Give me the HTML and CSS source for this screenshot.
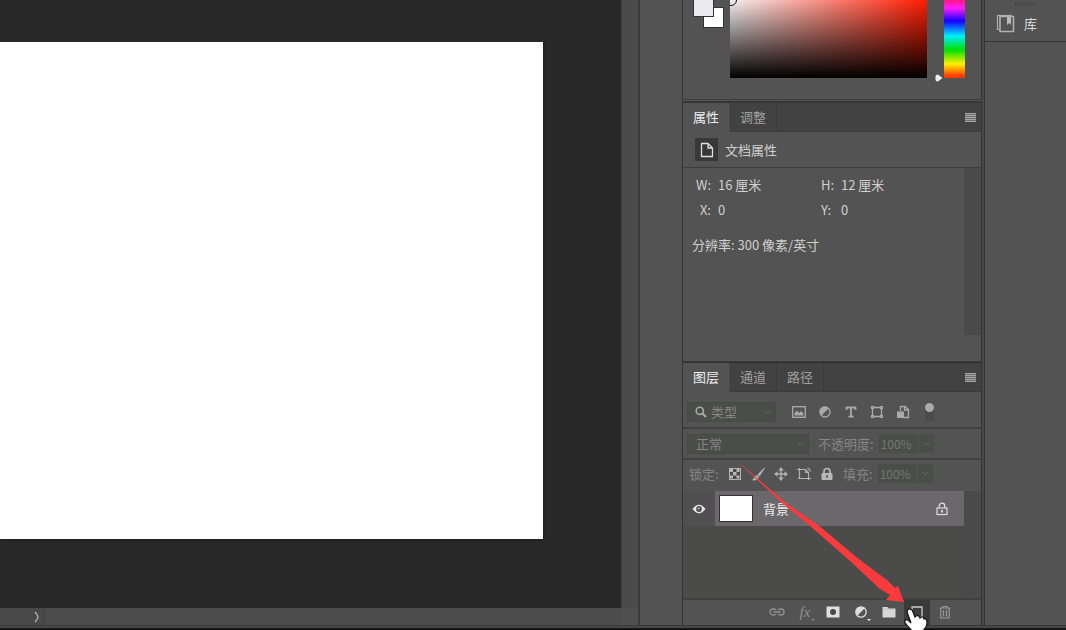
FILE: index.html
```html
<!DOCTYPE html>
<html lang="zh-CN">
<head>
<meta charset="utf-8">
<meta name="viewport" content="width=device-width, initial-scale=1">
<title>图像编辑器</title>
<link rel="stylesheet" href="styles.css">
</head>
<body>
<div class="app">
  <div class="main">
    <main class="workspace">
      <div class="stage"><div class="artboard"></div></div>
      <div class="scroll-y"></div>
      <div class="status"><button class="status-more" aria-label="更多状态"><svg width="6" height="12" viewBox="0 0 6 12"><path d="M1 1C5 5 5 7 1 11" fill="none" stroke="#b8b8b8" stroke-width="1.3"/></svg></button></div>
      <div class="scroll-corner"></div>
    </main>
    <div class="gutter"></div>
    <aside class="dock">
      <section class="panel color-panel" aria-label="颜色">
        <div class="swatches"><span class="swatch back"></span><span class="swatch front"></span></div>
        <div class="field"><span class="field-ring"></span></div>
        <div class="hue"><svg class="hue-pointer" width="8" height="8" viewBox="0 0 8 8"><path d="M0.500 2Q1 0.500 3 0.500L7.500 4L3 7.500Q1 7.500 0.500 6Z" fill="#eee"/></svg></div>
      </section>

      <section class="panel properties">
        <div class="tabs" role="tablist">
          <button class="tab active" role="tab" aria-selected="true">属性</button>
          <button class="tab" role="tab" aria-selected="false">调整</button>
          <button class="menu" aria-label="属性菜单"><span class="bars"></span></button>
        </div>
        <div class="doc-head">
          <span class="doc-icon"><svg width="14" height="16" viewBox="0 0 14 16" fill="none" stroke="#ddd" stroke-width="1.300"><path d="M1.500 1.500H8L12.500 6V14.500H1.500ZM8 1.500V6H12.500"/></svg></span>
          <span>文档属性</span>
        </div>
        <div class="doc-body">
          <div class="doc-info">
            <dl class="metrics">
              <div><dt>W:</dt><dd>16 厘米</dd></div>
              <div><dt>H:</dt><dd>12 厘米</dd></div>
              <div><dt>X:</dt><dd>0</dd></div>
              <div><dt>Y:</dt><dd>0</dd></div>
            </dl>
            <p class="resolution">分辨率: 300 像素/英寸</p>
          </div>
          <div class="track"></div>
        </div>
      </section>

      <section class="panel layers">
        <div class="tabs" role="tablist">
          <button class="tab active" role="tab" aria-selected="true">图层</button>
          <button class="tab" role="tab" aria-selected="false">通道</button>
          <button class="tab" role="tab" aria-selected="false">路径</button>
          <button class="menu" aria-label="图层菜单"><span class="bars"></span></button>
        </div>
        <div class="row filter-row">
          <div class="combo kind">
            <svg class="search" width="12" height="12" viewBox="0 0 12 12" fill="none" stroke="#aaa"><circle cx="4.800" cy="4.800" r="3.600" stroke-width="1.600"/><path d="M7.500 7.500L11 11" stroke-width="2.200"/></svg>
            <select aria-label="图层类型"><option>类型</option></select>
            <svg class="chev" width="7" height="5" viewBox="0 0 7 5"><path d="M0.500 1L3.500 4L6.500 1" fill="none" stroke="#6b6c6b"/></svg>
          </div>
          <div class="filters">
            <button aria-label="像素图层"><svg width="16" height="16" viewBox="0 0 16 16"><rect x="1.700" y="2.700" width="12.600" height="10.600" fill="none" stroke="#aaa" stroke-width="1.300"/><path d="M3.500 11.500V9L6 6.500L8 9L10 7L12.500 9.500V11.500Z" fill="#aaa"/></svg></button>
            <button aria-label="调整图层"><svg width="16" height="16" viewBox="0 0 16 16"><circle cx="8" cy="8" r="5" fill="none" stroke="#aaa" stroke-width="1.300"/><path d="M11.500 4.500A5 5 0 1 0 4.500 11.500Z" fill="#aaa"/></svg></button>
            <button aria-label="文字图层"><svg width="16" height="16" viewBox="0 0 16 16"><path d="M3.500 3V6M12.500 3V6M3 3.500H13M8 3V13M5.500 12.700H10.500" fill="none" stroke="#aaa" stroke-width="1.800"/></svg></button>
            <button aria-label="形状图层"><svg width="16" height="16" viewBox="0 0 16 16" fill="none" stroke="#aaa" stroke-width="1.300"><path d="M3.500 3.500H12.500V12.500H3.500Z"/><g fill="#858585" stroke-width="1"><rect x="2.500" y="2.500" width="2" height="2"/><rect x="11.500" y="2.500" width="2" height="2"/><rect x="2.500" y="11.500" width="2" height="2"/><rect x="11.500" y="11.500" width="2" height="2"/></g></svg></button>
            <button aria-label="智能对象"><svg width="16" height="16" viewBox="0 0 16 16"><path d="M5.500 7V2.500H10L13.500 5.500V13.500H9M9.500 2.500V6H13" fill="none" stroke="#aaa" stroke-width="1.300"/><rect x="2" y="7.500" width="7" height="6.500" fill="#aaa"/></svg></button>
          </div>
          <button class="toggle" aria-label="打开图层过滤"><span></span></button>
        </div>
        <div class="row blend-row">
          <div class="combo mode">
            <select aria-label="混合模式"><option>正常</option></select>
            <svg class="chev" width="7" height="5" viewBox="0 0 7 5"><path d="M0.500 1L3.500 4L6.500 1" fill="none" stroke="#6b6c6b"/></svg>
          </div>
          <label for="opacity">不透明度:</label>
          <div class="percent"><input id="opacity" value="100%"><button aria-label="不透明度滑块"><svg width="7" height="5" viewBox="0 0 7 5"><path d="M0.500 1L3.500 4L6.500 1" fill="none" stroke="#6b6c6b"/></svg></button></div>
        </div>
        <div class="row lock-row">
          <span class="lock-label">锁定:</span>
          <div class="locks">
            <button aria-label="锁定透明像素"><svg width="16" height="16" viewBox="0 0 16 16"><rect x="2.500" y="2.500" width="11" height="11" fill="#494949" stroke="#b3b3b3"/><path d="M3 3h3v3h-3zM9.500 3h3v3h-3zM6 6h3.500v3.500h-3.500zM3 9.500h3v3h-3zM9.500 9.500h3v3h-3z" fill="#b9b9b9"/></svg></button>
            <button aria-label="锁定图像像素"><svg width="16" height="16" viewBox="0 0 16 16"><path d="M14.500 1.500L7.500 8.500L9.500 10.500L15 2Z" fill="#b3b3b3"/><path d="M7 9L9 11C8 14 5 15 1.500 14C4 13.500 4 10 7 9Z" fill="#a9bcb1"/></svg></button>
            <button aria-label="锁定位置"><svg width="16" height="16" viewBox="0 0 16 16"><path d="M8 3V13M3 8H13" stroke="#b3b3b3" stroke-width="1.400"/><path d="M8 1L10.800 4.500H5.200ZM8 15L10.800 11.500H5.200ZM1 8L4.500 5.200V10.800ZM15 8L11.500 5.200V10.800Z" fill="#b3b3b3"/></svg></button>
            <button aria-label="防止画板嵌套"><svg width="16" height="16" viewBox="0 0 16 16" fill="none" stroke="#b3b3b3" stroke-width="1.200"><path d="M3.500 2V13M1 3.500H9.500L12.500 6.500V14M2 12.500H15M9.500 3.500V6.500H12.500M11.500 2Q14 3 14.500 5.500"/></svg></button>
            <button aria-label="全部锁定"><svg width="16" height="16" viewBox="0 0 16 16"><path d="M5 7V5.500A3 3 0 0 1 11 5.500V7" fill="none" stroke="#b8b8b8" stroke-width="1.700"/><rect x="2.500" y="7" width="11" height="7" rx="1" fill="#b8b8b8"/><path d="M8 9V12" stroke="#535353" stroke-width="1.500"/></svg></button>
          </div>
          <label for="fill">填充:</label>
          <div class="percent"><input id="fill" value="100%"><button aria-label="填充滑块"><svg width="7" height="5" viewBox="0 0 7 5"><path d="M0.500 1L3.500 4L6.500 1" fill="none" stroke="#6b6c6b"/></svg></button></div>
        </div>
        <div class="layer-area">
          <div class="layer-list">
            <div class="layer">
              <button class="eye" aria-label="显示图层"><svg width="14" height="10" viewBox="0 0 14 10"><path d="M0.500 5Q7 -3.500 13.500 5Q7 13.500 0.500 5Z" fill="#e8e8e8"/><circle cx="7" cy="5" r="2.900" fill="#505050"/><circle cx="6.500" cy="4.500" r="1" fill="#bbb"/></svg></button>
              <div class="layer-main">
                <span class="thumb"></span><span class="layer-name">背景</span>
                <svg width="12" height="14" viewBox="0 0 12 14" fill="none" stroke="#ddd" stroke-width="1.200"><path d="M3.200 6V4A2.800 2.800 0 0 1 8.800 4V6"/><rect x="1" y="6" width="10" height="6.500"/><path d="M6 8V10.500" stroke-width="1.800"/></svg>
              </div>
            </div>
          </div>
          <div class="track"></div>
        </div>
        <div class="actions">
          <button aria-label="链接图层"><svg width="16" height="16" viewBox="0 0 16 16" fill="none" stroke="#929292" stroke-width="1.300"><path d="M7 10C6.500 11 5.500 11 4 11A3 3 0 0 1 4 5C5.500 5 6.500 5 7 6M9 6C9.500 5 10.500 5 12 5A3 3 0 0 1 12 11C10.500 11 9.500 11 9 10M4.500 8H11.500"/></svg></button>
          <button class="fx" aria-label="图层样式">fx<span class="corner"></span></button>
          <button aria-label="添加蒙版"><svg width="16" height="16" viewBox="0 0 16 16"><rect x="1.500" y="2.500" width="13" height="11" fill="#e0e0e0"/><circle cx="8" cy="8" r="3" fill="#4a4a4a"/></svg></button>
          <button aria-label="新建调整图层"><svg width="16" height="16" viewBox="0 0 16 16"><circle cx="8" cy="8" r="5.200" fill="none" stroke="#ddd" stroke-width="1.300"/><path d="M11.700 4.300A5.200 5.200 0 1 0 4.300 11.700Z" fill="#ddd"/></svg><span class="corner lit"></span></button>
          <button aria-label="新建组"><svg width="16" height="16" viewBox="0 0 16 16"><path d="M1.500 3H6.500L7.500 4.500H14.500V13.500H1.500Z" fill="#d8d8d8"/><path d="M1.500 5.200H14.500" stroke="#b6b0b0" stroke-width="0.600"/></svg></button>
          <button class="pressed" aria-label="新建图层"><svg width="16" height="16" viewBox="0 0 16 16"><path d="M3 3H13V13H3Z" fill="none" stroke="#ccc" stroke-width="1.300"/></svg></button>
          <button aria-label="删除图层"><svg width="16" height="16" viewBox="0 0 16 16" fill="none" stroke="#999" stroke-width="1.200"><path d="M2.500 4H13.500M6 4V2.500H10V4M3.800 4V14H12.200V4M6.500 6V12.500M9.500 6V12.500"/></svg></button>
        </div>
        <svg class="guide" width="298" height="268" viewBox="0 0 298 268">
          <path d="M53 97L103 140L135 162L177 197L204 217L212 225L215 223L221 239L203 237L207 232L197 226L166 197L126 162L99 140Z" fill="#fa3b3d"/>
          <path d="M224 249C224 245 229 245 230 249L232 254C233 252 236 252 237 255C238 253 241 254 241 256C243 255 244 257 244 260C244 264 242 265 240 268H229C228 266 225 264 223 261C220 258 223 256 225 257L228 260Z" fill="#fff" stroke="#111" stroke-width="1.200"/>
        </svg>
      </section>
    </aside>
    <aside class="library">
      <span class="grip"></span>
      <button class="library-button"><svg width="19" height="19" viewBox="0 0 19 19" fill="none" stroke="#b0b0b0"><path d="M4 2.500H17.500V17.500H4Z" stroke-width="1.600"/><path d="M4 1.500H1.500V15.500H4" stroke-width="1.200"/><path d="M1.500 1.500H16" stroke-width="1.200"/><path d="M11 3H15V11L13 9L11 11Z" fill="#bbb" stroke="none"/></svg>库</button>
    </aside>
  </div>
  <div class="window-edge"></div>
</div>
</body>
</html>
```

FILE: styles.css
```css
* { box-sizing: border-box; }
body {
  margin: 0;
  background: #535353;
  color: #d0d0d0;
  font: 13px/18px "Noto Sans CJK SC", sans-serif;
}
button, input, select {
  margin: 0;
  padding: 0;
  border: 0;
  border-radius: 0;
  background: none;
  color: inherit;
  font: inherit;
}
button svg { display: block; }
.app { display: flex; flex-direction: column; min-height: 100vh; }
.main { display: flex; flex: 1; }
.window-edge { height: 5px; background: #484848; border-top: 1px solid #383838; border-bottom: 2px solid #161616; }

.workspace {
  display: grid;
  flex: 1;
  min-width: 0;
  grid-template: 1fr 17px / 1fr 17px;
  background: #4a4a4a;
}
.stage { display: flex; padding: 42px 78px 69px 0; background: #292929; }
.artboard { flex: 1; background: #fff; box-shadow: 1px 1px 2px #1c1c1c; }
.scroll-y { background: #4a4a4a; border-left: 1px solid #414141; }
.status { display: flex; background: #4c4c4c; }
.status-more { display: flex; width: 45px; padding: 3px 4px 0 0; justify-content: flex-end; border-right: 1px solid #434343; background: #484848; }
.scroll-corner { background: #505050; }
.gutter { width: 44px; border-left: 2px solid #3b3b3b; background: #525252; }

.dock { display: flex; flex-direction: column; width: 302px; border-right: 2px solid #484848; }
.panel { border: 1px solid #343434; border-width: 0 1px 0 1px; background: #535353; }
.color-panel { display: flex; height: 100px; padding-left: 10px; border-bottom: 1px solid #3e3e3e; }
.swatches { position: relative; width: 31px; height: 27px; }
.swatch { position: absolute; border: 1px solid #333; }
.back { top: 7px; left: 10px; width: 21px; height: 21px; background: #fff; }
.front { top: -4px; left: 0; width: 21px; height: 21px; background: #ebeaef; }
.field {
  position: relative;
  width: 197px;
  height: 78px;
  margin-left: 6px;
  overflow: hidden;
  background: linear-gradient(to top, #000, transparent), linear-gradient(to right, #f4f0f2, #ff1c00);
}
.field-ring { position: absolute; left: -5px; top: -6px; width: 12px; height: 12px; border: 1px solid #111; border-radius: 50%; }
.hue {
  position: relative;
  width: 21px;
  height: 78px;
  margin-left: 17px;
  background: linear-gradient(#ff1680, #ff1eff 8px, #1400ff 21px, #00f0ff 36px, #00e000 50px, #fff000 64px, #ff3a00 76px);
}
.hue-pointer { position: absolute; left: -9px; bottom: -4px; }

.properties { display: flex; flex-direction: column; height: 261px; margin-top: 1px; border-top: 2px solid #363636; border-bottom: 1px solid #3c3c3c; }
.layers { position: relative; display: flex; flex: 1; flex-direction: column; border-top: 1px solid #2f2f2f; }
.tabs { display: flex; height: 29px; border-bottom: 1px solid #3b3b3b; background: #424242; }
.tab { width: 47px; height: 28px; border-right: 1px solid #393939; color: #a0a0a0; }
.tab.active { height: 29px; padding-bottom: 1px; border-right-color: #484848; background: #535353; color: #eee; }
.menu { display: flex; width: 22px; margin-left: auto; align-items: center; justify-content: center; }
.bars { width: 11px; height: 9px; background: repeating-linear-gradient(#a5a5a5 0 1px, #707070 1px 2px); }
.doc-head { display: flex; height: 36px; padding-left: 12px; align-items: center; gap: 7px; border-bottom: 1px solid #3c3c3c; }
.doc-icon { display: flex; width: 23px; height: 23px; align-items: center; justify-content: center; background: #383838; }
.doc-body { display: flex; flex: 1; }
.doc-info { flex: 1; padding: 8px 0 0 9px; }
.metrics { display: grid; margin: 0; grid-template-columns: 124px 1fr; row-gap: 7px; }
.metrics div { display: flex; gap: 7px; }
.metrics dt { width: 19px; text-align: right; }
.metrics div:nth-child(even) { padding-left: 5px; }
.metrics div:nth-child(even) dt { width: 13px; text-align: left; }
.metrics dd { margin: 0; }
.resolution { margin: 17px 0 0; }
.track { width: 17px; background: #4a4a4a; }
.doc-body .track { margin-bottom: 26px; }

.row { display: flex; align-items: center; padding-left: 4px; border-bottom: 2px solid #414141; }
.filter-row { height: 37px; padding-top: 5px; }
.blend-row { height: 31px; color: #858585; }
.lock-row { height: 31px; padding-bottom: 4px; border-bottom: 0; color: #858585; }
.combo { display: flex; height: 20px; align-items: center; background: #4b4d4a; border: 1px solid #484848; color: #858585; }
.combo select { flex: 1; min-width: 0; appearance: none; }
.kind { width: 89px; padding: 0 4px 0 7px; gap: 4px; }
.mode { width: 122px; padding: 0 4px 0 8px; }
.filters { display: flex; margin-left: 15px; gap: 10px; }
.toggle { display: flex; width: 9px; height: 18px; margin-left: 14px; background: #4b4b4b; }
.toggle span { width: 9px; height: 9px; border-radius: 50%; background: #aaa; }
.blend-row label { margin-left: 9px; }
.percent { display: flex; height: 19px; margin-left: 5px; color: #747674; font-size: 12px; }
.percent input { width: 39px; padding-left: 2px; background: #4b4d4a; }
.percent button { display: flex; width: 16px; align-items: center; justify-content: center; border-left: 1px solid #555; background: #4b4d4a; }
.lock-label { width: 40px; padding-left: 2px; }
.locks { display: flex; gap: 7px; }
.lock-row label { margin-left: 8px; }

.layer-area { display: flex; flex: 1; background: #4b4c49; }
.layer-list { flex: 1; }
.layer { display: flex; height: 35px; }
.eye { display: flex; width: 32px; align-items: center; justify-content: center; background: #505050; }
.layer-main { display: flex; flex: 1; padding: 0 16px 0 4px; align-items: center; background: #6a686b; color: #eee; }
.thumb { width: 34px; height: 27px; border: 1px solid #333; background: #fff; }
.layer-name { flex: 1; padding-left: 10px; }
.actions { display: flex; height: 27px; padding-right: 22px; justify-content: flex-end; border-top: 2px solid #404040; }
.actions button { position: relative; display: flex; width: 28px; padding-bottom: 2px; align-items: center; justify-content: center; }
.actions .fx { color: #929292; font: italic 15px/20px "Liberation Serif", serif; }
.actions .pressed { width: 26px; margin: 0 1px; background: #3b3b3b; }
.corner { position: absolute; right: 4px; bottom: 4px; border: 2px solid transparent; border-top-color: #858585; border-bottom: 0; }
.lit { border-top-color: #eee; }
.guide { position: absolute; top: 0; left: 0; pointer-events: none; }

.library { width: 82px; border-left: 1px solid #343434; }
.grip { display: block; width: 20px; height: 4px; margin: 2px 0 0 30px; background: repeating-linear-gradient(90deg, #454545 0 1px, #535353 1px 2px); }
.library-button { display: flex; width: 100%; height: 36px; padding-left: 11px; align-items: center; gap: 9px; border-bottom: 1px solid #363636; color: #ddd; }
```
